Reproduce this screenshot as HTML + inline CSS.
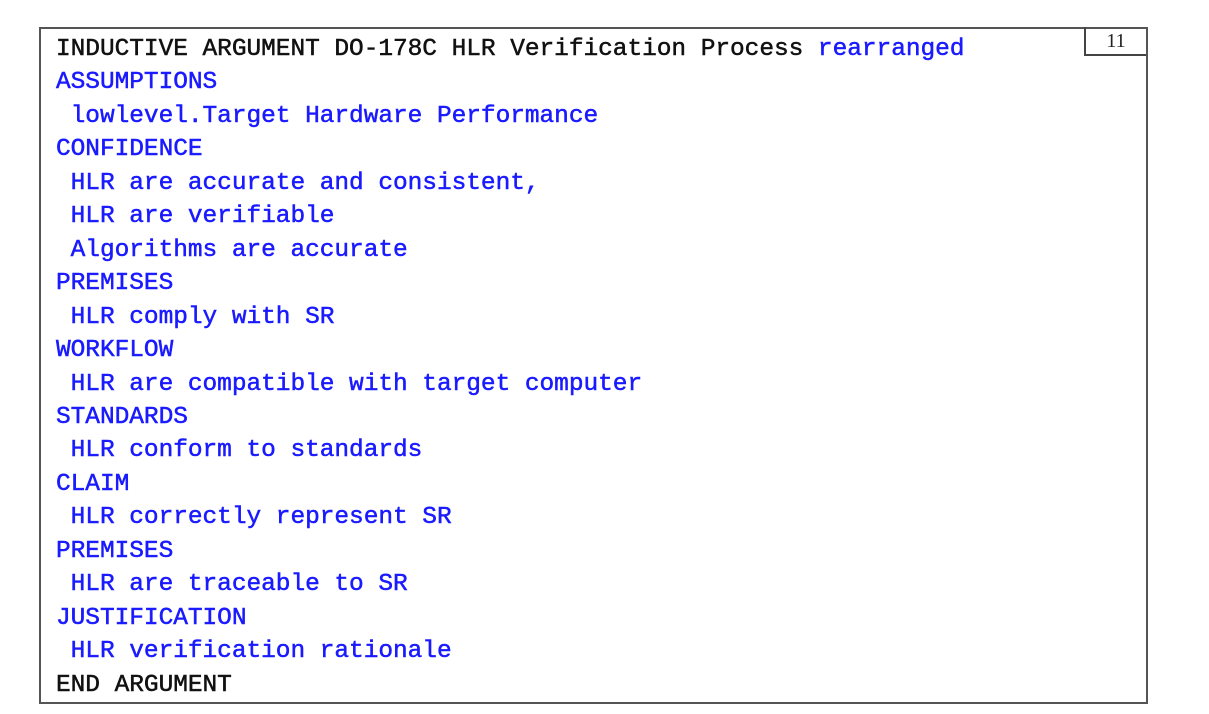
<!DOCTYPE html>
<html><head><meta charset="utf-8"><style>
body{margin:0;background:#fff;width:1209px;height:714px;position:relative;overflow:hidden}
.box{position:absolute;left:39px;top:27px;width:1105px;height:673px;border:2px solid #555;box-sizing:content-box}
.pn{position:absolute;left:1084px;top:27px;width:60px;height:27px;border:2px solid #444;border-top:none;border-right:none;font-family:"Liberation Serif",serif;font-size:20px;text-align:center;line-height:28px;color:#222}
.t{position:absolute;left:56px;top:33px;font-family:"Liberation Mono",monospace;font-size:24.5px;line-height:33.45px;letter-spacing:-0.05px;white-space:pre;color:#1a1aff;-webkit-text-stroke:0.5px currentColor}
.k{color:#111}
</style></head><body>
<div class="box"></div>
<div class="pn">11</div>
<div class="t"><span class="k">INDUCTIVE ARGUMENT DO-178C HLR Verification Process</span> rearranged
ASSUMPTIONS
 lowlevel.Target Hardware Performance
CONFIDENCE
 HLR are accurate and consistent,
 HLR are verifiable
 Algorithms are accurate
PREMISES
 HLR comply with SR
WORKFLOW
 HLR are compatible with target computer
STANDARDS
 HLR conform to standards
CLAIM
 HLR correctly represent SR
PREMISES
 HLR are traceable to SR
JUSTIFICATION
 HLR verification rationale
<span class="k">END ARGUMENT</span></div>
</body></html>
